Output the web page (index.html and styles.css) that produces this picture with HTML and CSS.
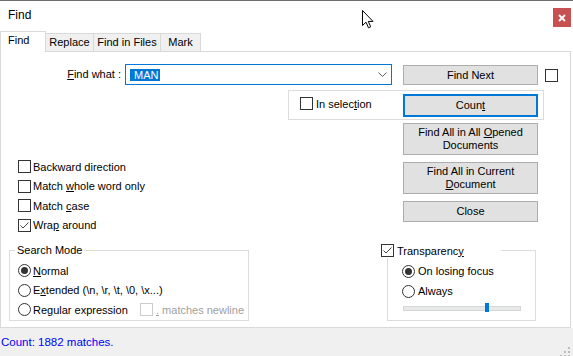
FILE: index.html
```html
<!DOCTYPE html>
<html lang="en">
<head>
<meta charset="utf-8">
<title>Find</title>
<link rel="stylesheet" href="styles.css">
</head>
<body>
<div class="window">
  <div class="titlebar">
    <span class="title">Find</span>
    <div class="close-x">
      <svg width="8" height="8" viewBox="0 0 8 8"><path d="M1 1 L7 7 M7 1 L1 7" stroke="#fff" stroke-width="1.8" fill="none"/></svg>
    </div>
  </div>
  <div class="tabs">
    <div class="tab active">Find</div>
    <div class="tab tab-replace">Replace</div>
    <div class="tab tab-files">Find in Files</div>
    <div class="tab tab-mark">Mark</div>
  </div>
  <div class="panel">
    <div class="row-find">
      <label class="find-label"><u>F</u>ind what :</label>
      <div class="combo">
        <span class="sel"> MAN</span>
        <svg class="chev" width="9" height="5" viewBox="0 0 9 5"><path d="M0.5 0.5 L4.5 4.5 L8.5 0.5" stroke="#5a5a5a" stroke-width="1" fill="none"/></svg>
      </div>
      <div class="btn find-next"><span>Find Next</span></div>
      <span class="box solo"></span>
    </div>
    <div class="sel-group">
      <div class="chk-line"><span class="box"></span><span class="lbl">In selec<u>t</u>ion</span></div>
      <div class="btn count"><span>Coun<u>t</u></span></div>
    </div>
    <div class="middle">
      <div class="options">
        <div class="opt"><span class="box"></span><span>Backward direction</span></div>
        <div class="opt"><span class="box"></span><span>Match <u>w</u>hole word only</span></div>
        <div class="opt"><span class="box"></span><span>Match <u>c</u>ase</span></div>
        <div class="opt"><span class="box"><svg width="11" height="11" viewBox="0 0 11 11"><path d="M1.5 5.5 L4 8 L9.5 2.5" stroke="#444" stroke-width="1" fill="none"/></svg></span><span>Wra<u>p</u> around</span></div>
      </div>
      <div class="actions">
        <div class="btn tall"><span>Find All in All <u>O</u>pened<br>Documents</span></div>
        <div class="btn tall"><span>Find All in Current<br><u>D</u>ocument</span></div>
        <div class="btn short"><span>Close</span></div>
      </div>
    </div>
    <div class="bottom">
      <fieldset class="group mode">
        <legend class="mode-legend">Search Mode</legend>
        <div class="mode-body">
          <div class="opt"><span class="radio on"></span><span><u>N</u>ormal</span></div>
          <div class="opt"><span class="radio"></span><span>E<u>x</u>tended (\n, \r, \t, \0, \x...)</span></div>
          <div class="opt">
            <span class="radio"></span><span class="regex-lbl">Re<u>g</u>ular expression</span>
            <span class="box disabled"></span><span class="dim"><u>.</u> matches newline</span>
          </div>
        </div>
      </fieldset>
      <fieldset class="group trans">
        <legend class="trans-legend"><span class="box"><svg width="11" height="11" viewBox="0 0 11 11"><path d="M1.5 5.5 L4 8 L9.5 2.5" stroke="#444" stroke-width="1" fill="none"/></svg></span><span>Transparenc<u>y</u></span></legend>
        <div class="trans-body">
          <div class="opt wide"><span class="radio on"></span><span>On losing focus</span></div>
          <div class="opt wide"><span class="radio"></span><span>Always</span></div>
          <div class="track"><span class="thumb"></span></div>
        </div>
      </fieldset>
    </div>
  </div>
  <div class="status">
    <span>Count: 1882 matches.</span>
    <svg class="grip" width="14" height="11" viewBox="0 0 14 11">
      <rect x="10" y="1" width="2" height="2" fill="#bdbdbd"/>
      <rect x="6" y="5" width="2" height="2" fill="#bdbdbd"/>
      <rect x="10" y="5" width="2" height="2" fill="#bdbdbd"/>
      <rect x="2" y="9" width="2" height="2" fill="#bdbdbd"/>
      <rect x="6" y="9" width="2" height="2" fill="#bdbdbd"/>
      <rect x="10" y="9" width="2" height="2" fill="#bdbdbd"/>
    </svg>
  </div>
  <svg class="cursor" width="13" height="19" viewBox="0 0 13 19">
    <path d="M0.5 0.5 L0.5 15.5 L4 12.2 L6.5 17.8 L8.7 16.8 L6.3 11.4 L11 11.4 Z" fill="#fff" stroke="#000" stroke-width="1" stroke-linejoin="miter"/>
  </svg>
</div>
</body>
</html>
```
FILE: styles.css
```css
* { box-sizing: border-box; }
html, body { margin: 0; padding: 0; background: #fff; }
body {
  font-family: "Liberation Sans", Arial, sans-serif;
  font-size: 11px;
  color: #000;
}
u { text-decoration: underline; text-underline-offset: 1px; }

.window {
  position: relative;
  width: 573px;
  height: 356px;
  display: flex;
  flex-direction: column;
  overflow: hidden;
  background: #fff;
  border-top: 1px solid #6e6e6e;
}

.titlebar {
  height: 30px;
  display: flex;
  align-items: flex-start;
  padding-left: 8px;
  flex: none;
}
.title { font-size: 12px; line-height: 15px; margin-top: 7px; }
.close-x {
  margin-left: auto;
  margin-right: 2px;
  margin-top: 7px;
  width: 18px;
  height: 19px;
  background: #c75050;
  display: flex;
  align-items: center;
  justify-content: center;
}

.tabs { height: 20px; display: flex; align-items: flex-end; flex: none; }
.tab {
  height: 18px;
  border: 1px solid #d9d9d9;
  border-bottom: none;
  background: #f0f0f0;
  line-height: 17px;
  text-align: center;
  margin-left: -1px;
}
.tab.active {
  height: 21px;
  width: 46px;
  margin-left: 0;
  margin-bottom: -1px;
  background: #fff;
  position: relative;
  z-index: 1;
  text-align: left;
  padding-left: 7px;
}
.tab-replace { width: 49px; }
.tab-files { width: 68px; }
.tab-mark { width: 41px; }

.panel {
  height: 277px;
  width: 571px;
  border: 1px solid #d9d9d9;
  display: flex;
  flex-direction: column;
  flex: none;
}

.row-find { display: flex; align-items: flex-start; margin-top: 12px; }
.find-label { width: 120px; text-align: right; margin-right: 4px; line-height: 20px; }
.combo {
  width: 267px;
  height: 21px;
  border: 1px solid #0078d7;
  display: flex;
  align-items: center;
  padding-left: 4px;
  padding-right: 4px;
}
.sel {
  background: #0078d7;
  color: #fff;
  white-space: pre;
  line-height: 12px;
  height: 12px;
  padding: 0 1px;
}
.chev { margin-left: auto; }

.btn {
  display: flex;
  align-items: center;
  justify-content: center;
  text-align: center;
  background: #e1e1e1;
  border: 1px solid #adadad;
  line-height: 13px;
  width: 135px;
}
.find-next { height: 20px; margin-left: 11px; margin-top: 1px; }
.solo { margin-left: 7px; margin-top: 5px; }

.box {
  width: 13px;
  height: 13px;
  border: 1px solid #333;
  background: #fff;
  display: inline-flex;
  align-items: center;
  justify-content: center;
  flex: none;
}
.box.disabled { border-color: #cccccc; }
.radio {
  width: 13px;
  height: 13px;
  border: 1px solid #333;
  border-radius: 50%;
  background: #fff;
  display: inline-flex;
  align-items: center;
  justify-content: center;
  flex: none;
}
.radio.on::after {
  content: "";
  width: 7px;
  height: 7px;
  border-radius: 50%;
  background: #333;
}

.sel-group {
  margin-left: 287px;
  margin-top: 5px;
  width: 256px;
  height: 30px;
  border: 1px solid #dcdcdc;
  display: flex;
  align-items: flex-start;
  padding-left: 11px;
}
.chk-line { display: flex; align-items: center; gap: 3px; margin-top: 6px; height: 13px; }
.btn.count {
  margin-left: auto;
  margin-right: 5px;
  margin-top: 3px;
  height: 23px;
  border: 2px solid #0078d7;
}

.middle { display: flex; }
.options { margin-left: 17px; padding-top: 37px; display: flex; flex-direction: column; }
.opt { height: 19.5px; display: flex; align-items: center; gap: 2px; }
.actions {
  margin-left: auto;
  margin-right: 32px;
  padding-top: 3px;
  display: flex;
  flex-direction: column;
  gap: 7px;
}
.btn.tall { height: 32px; }
.btn.short { height: 21px; }

.bottom {
  margin-top: auto;
  margin-bottom: 6px;
  display: flex;
  align-items: flex-end;
}
fieldset.group {
  margin: 0;
  padding: 0;
  border: 1px solid #dcdcdc;
  min-width: 0;
}
fieldset.mode { margin-left: 8px; width: 240px; height: 77px; }
fieldset.trans { margin-left: 138px; width: 149px; height: 78px; }
.mode-legend {
  margin-left: 5px;
  padding: 0 2px;
  line-height: 13px;
  height: 13px;
}
.trans-legend {
  margin-left: -8px;
  padding: 0 0 0 1px;
  width: 121px;
  height: 15px;
  background: #fff;
  display: flex;
  align-items: center;
  gap: 3px;
}
.mode-body { padding-left: 8px; padding-top: 4px; }
.regex-lbl { width: 105px; }
.dim { color: #a0a0a0; margin-left: 1px; }
.trans-body { padding-left: 14px; padding-top: 3px; }
.opt.wide { height: 20px; gap: 3px; }
.track {
  position: relative;
  margin-top: 5px;
  margin-left: 1px;
  width: 118px;
  height: 5px;
  background: #e7eae8;
  border: 1px solid #d6d6d6;
}
.thumb {
  position: absolute;
  left: 81px;
  top: -4px;
  width: 4px;
  height: 9px;
  background: #0078d7;
}

.status {
  height: 28px;
  background: #f0f0f0;
  display: flex;
  align-items: center;
  padding-left: 1px;
  color: #0000ff;
  font-size: 11.5px;
  flex: none;
}
.grip { margin-left: auto; align-self: flex-end; margin-right: 1px; margin-bottom: -1px; }

.cursor { position: absolute; left: 362px; top: 9px; }
```
